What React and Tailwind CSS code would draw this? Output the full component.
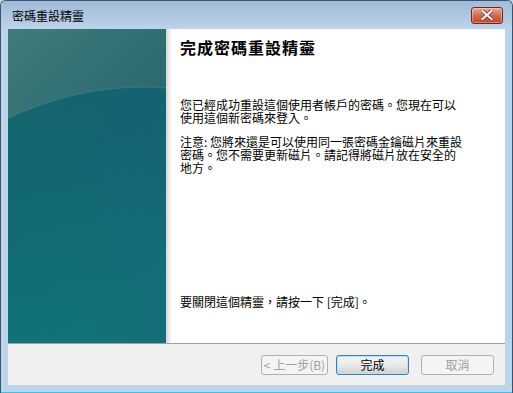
import React from "react";

const font = { fontFamily: '"Noto Sans CJK TC", "Noto Sans", sans-serif' };

function CloseButton() {
  return (
    <div className="w-[32px] h-[17px] rounded-[3px] border border-[#6a2a21] bg-gradient-to-b from-[#e8a796] via-[#d26a52] to-[#c3432b] flex items-center justify-center shadow-[inset_0_0_0_1px_rgba(255,255,255,0.35)]">
      <svg width="12" height="10" viewBox="0 0 12 10">
        <path d="M1.5 1 L10.5 9 M10.5 1 L1.5 9" stroke="#6b2a20" strokeWidth="3.6" strokeLinecap="square" />
        <path d="M1.5 1 L10.5 9 M10.5 1 L1.5 9" stroke="#f4f4f4" strokeWidth="2.2" strokeLinecap="square" />
      </svg>
    </div>
  );
}

function SidePanel() {
  return (
    <div className="w-[158px] h-full shrink-0">
      <svg width="158" height="314" viewBox="0 0 158 314" className="block">
        <defs>
          <linearGradient id="base" x1="0" y1="0" x2="0.35" y2="1">
            <stop offset="0" stopColor="#195d68" />
            <stop offset="0.5" stopColor="#136270" />
            <stop offset="1" stopColor="#127379" />
          </linearGradient>
          <linearGradient id="baseR" x1="0" y1="0" x2="1" y2="0">
            <stop offset="0" stopColor="#0e7a7a" stopOpacity="0.25" />
            <stop offset="1" stopColor="#1a5f78" stopOpacity="0.3" />
          </linearGradient>
          <linearGradient id="top" x1="0" y1="0" x2="1" y2="0.6">
            <stop offset="0" stopColor="#407b7b" />
            <stop offset="1" stopColor="#2c6a70" />
          </linearGradient>
        </defs>
        <rect width="158" height="314" fill="url(#base)" />
        <rect width="158" height="314" fill="url(#baseR)" />
        <path d="M0 0 H158 V59 Q 80 52 0 89 Z" fill="url(#top)" />
        <path d="M0 89 Q 80 52 158 59" fill="none" stroke="#4f8a8a" strokeOpacity="0.4" strokeWidth="1.5" />
      </svg>
    </div>
  );
}

function Btn({ children, w, disabled }) {
  return (
    <div
      className={
        "h-[20px] rounded-[3px] border flex items-center justify-center text-[12px] leading-none " +
        w +
        " " +
        (disabled
          ? "border-[#adb2b5] bg-[#f4f4f4] text-[#a0a0a0]"
          : "border-[#3c7fb1] bg-gradient-to-b from-[#f2f2f2] via-[#ebebeb] to-[#cfcfcf] text-black shadow-[inset_0_0_0_1px_#b7e2f8]")
      }
    >
      {children}
    </div>
  );
}

function Line({ children }) {
  return <div className="h-[13px] leading-[13px] text-[12px] whitespace-nowrap">{children}</div>;
}

export default function App() {
  return (
    <div className="w-[513px] h-[393px] bg-[#bdd3ea] overflow-hidden" style={font}>
      <div className="w-full h-full flex flex-col border border-[#3e536b] rounded-t-[6px] border-b-0 relative bg-[#bdd3ea]">
        {/* Title bar */}
        <div className="h-[28px] shrink-0 flex items-center justify-between pl-[11px] pr-[9px] bg-gradient-to-b from-[#9fbad8] to-[#bed3eb] rounded-t-[5px]">
          <span className="text-[12px] leading-none text-black pt-[1px]">密碼重設精靈</span>
          <CloseButton />
        </div>
        {/* Client */}
        <div className="mx-[7px] flex flex-col">
          <div className="h-[314px] flex bg-white">
            <SidePanel />
            <div className="w-[6px] h-full bg-gradient-to-r from-[#d4d4d4] via-[#ececec] to-white shrink-0" />
            <div className="flex-1 pl-[8px] pr-[10px] text-black">
              <div className="pt-[8px] text-[16px] leading-[20px] font-bold tracking-[1px]">完成密碼重設精靈</div>
              <div className="mt-[41px]">
                <Line>您已經成功重設這個使用者帳戶的密碼。您現在可以</Line>
                <Line>使用這個新密碼來登入。</Line>
              </div>
              <div className="mt-[11px]">
                <Line>注意: 您將來還是可以使用同一張密碼金鑰磁片來重設</Line>
                <Line>密碼。您不需要更新磁片。請記得將磁片放在安全的</Line>
                <Line>地方。</Line>
              </div>
              <div className="mt-[121px]">
                <Line>要關閉這個精靈，請按一下 [完成]。</Line>
              </div>
            </div>
          </div>
          <div className="h-[1px] bg-[#a0a0a0]" />
          <div className="h-[41px] bg-[#f0f0f0] flex items-center justify-end pr-[11px]">
            <Btn w="w-[67px]" disabled>&lt; 上一步(B)</Btn>
            <div className="w-[8px]" />
            <Btn w="w-[73px]">完成</Btn>
            <div className="w-[12px]" />
            <Btn w="w-[73px]" disabled>取消</Btn>
          </div>
        </div>
        <div className="flex-1" />
        <div className="h-[1px] bg-[#37c4e6]" />
      </div>
    </div>
  );
}
